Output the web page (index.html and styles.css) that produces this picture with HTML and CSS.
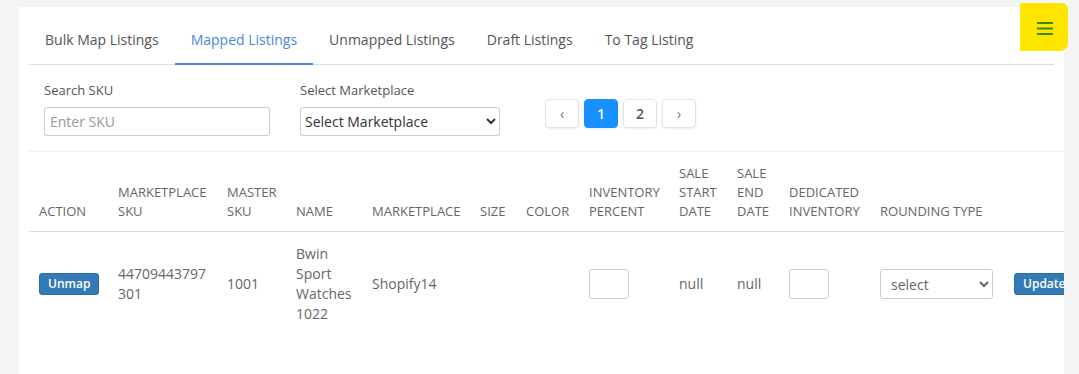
FILE: index.html
```html
<!DOCTYPE html>
<html lang="en">
<head>
    <meta charset="UTF-8">
    <meta name="viewport" content="width=device-width, initial-scale=1.0">
    <title>Mapped Listings</title>
    <link rel="stylesheet" href="styles.css">
</head>
<body>
    <div class="panel">
        <ul class="tabs">
            <li class="tab">Bulk Map Listings</li>
            <li class="tab active">Mapped Listings</li>
            <li class="tab">Unmapped Listings</li>
            <li class="tab">Draft Listings</li>
            <li class="tab">To Tag Listing</li>
        </ul>

        <div class="filters">
            <div class="field">
                <label>Search SKU</label>
                <input type="text" class="sku-input" placeholder="Enter SKU">
            </div>
            <div class="field">
                <label>Select Marketplace</label>
                <select class="market-select">
                    <option>Select Marketplace</option>
                </select>
            </div>
            <div class="pager">
                <button class="page arrow">&lsaquo;</button>
                <button class="page current">1</button>
                <button class="page">2</button>
                <button class="page arrow">&rsaquo;</button>
            </div>
        </div>

        <table class="listings">
            <colgroup>
                <col style="width:79px">
                <col style="width:109px">
                <col style="width:69px">
                <col style="width:76px">
                <col style="width:108px">
                <col style="width:46px">
                <col style="width:63px">
                <col style="width:90px">
                <col style="width:58px">
                <col style="width:52px">
                <col style="width:91px">
                <col style="width:134px">
                <col style="width:80px">
            </colgroup>
            <thead>
                <tr>
                    <th>Action</th>
                    <th>Marketplace SKU</th>
                    <th>Master SKU</th>
                    <th>Name</th>
                    <th>Marketplace</th>
                    <th>Size</th>
                    <th>Color</th>
                    <th>Inventory Percent</th>
                    <th>Sale Start Date</th>
                    <th>Sale End Date</th>
                    <th>Dedicated Inventory</th>
                    <th>Rounding Type</th>
                    <th></th>
                </tr>
            </thead>
            <tbody>
                <tr>
                    <td><button class="btn-blue">Unmap</button></td>
                    <td class="breakable">44709443797301</td>
                    <td>1001</td>
                    <td>Bwin Sport Watches 1022</td>
                    <td>Shopify14</td>
                    <td></td>
                    <td></td>
                    <td><input type="text" class="small-input"></td>
                    <td>null</td>
                    <td>null</td>
                    <td><input type="text" class="small-input"></td>
                    <td>
                        <select class="round-select">
                            <option>select</option>
                        </select>
                    </td>
                    <td><button class="btn-blue">Update</button></td>
                </tr>
            </tbody>
        </table>
    </div>

    <!-- highlighted menu toggle -->
    <div class="menu-mark">
        <svg width="16" height="14" viewBox="0 0 16 14">
            <rect x="0" y="1" width="16" height="2" fill="#3b8a00"/>
            <rect x="0" y="6.5" width="16" height="2" fill="#3b8a00"/>
            <rect x="0" y="12" width="16" height="2" fill="#3b8a00"/>
        </svg>
    </div>
</body>
</html>
```

FILE: styles.css
```css
body {
    margin: 0;
    padding: 7px 15px 0 19px;
    background-color: #f3f4f6;
    font-family: "Open Sans", "Liberation Sans", sans-serif;
    color: #666;
    height: 367px;
    overflow: hidden;
}
.panel {
    background-color: #fff;
    padding: 11px 10px 0 10px;
    height: 360px;
    overflow: hidden;
}
.tabs {
    list-style: none;
    margin: 0;
    padding: 0;
    display: flex;
    border-bottom: 1px solid #dedede;
}
.tab {
    padding: 12px 16px 13px;
    font-size: 14px;
    line-height: 20px;
    color: #555;
    margin-bottom: -1px;
    border-bottom: 2px solid transparent;
}
.tab.active {
    color: #4a88d6;
    border-bottom-color: #4a88d6;
}
.filters {
    display: flex;
    align-items: flex-start;
    padding: 16px 0 0 15px;
    height: 70px;
}
.field {
    display: flex;
    flex-direction: column;
    margin-right: 30px;
}
.field label {
    font-size: 13px;
    line-height: 18px;
    color: #555;
    margin-bottom: 8px;
}
.sku-input {
    width: 226px;
    height: 29px;
    box-sizing: border-box;
    border: 1px solid #ccc;
    border-radius: 3px;
    padding: 0 5px;
    font-family: inherit;
    font-size: 14px;
    color: #333;
}
.sku-input::placeholder {
    color: #999;
}
.market-select {
    width: 200px;
    height: 29px;
    box-sizing: border-box;
    border: 1px solid #ccc;
    border-radius: 3px;
    background: #fff;
    padding: 0;
    font-family: inherit;
    font-size: 14px;
    color: #333;
}
.pager {
    display: flex;
    gap: 5px;
    margin: 18px 0 0 15px;
}
.page {
    width: 34px;
    height: 29px;
    border: 1px solid #e3e3e3;
    border-radius: 4px;
    background: #fff;
    box-shadow: 0 1px 2px rgba(0, 0, 0, 0.08);
    font-family: inherit;
    font-size: 14px;
    font-weight: 600;
    color: #555;
    padding: 0;
}
.page.arrow {
    font-weight: 400;
    color: #777;
}
.page.current {
    background: #1890ff;
    border-color: #1890ff;
    color: #fff;
}
.listings {
    border-collapse: collapse;
    table-layout: fixed;
    width: 1055px;
    border-top: 1px solid #eee;
}
.listings th {
    text-align: left;
    vertical-align: bottom;
    font-size: 13px;
    line-height: 19px;
    font-weight: 400;
    text-transform: uppercase;
    color: #666;
    padding: 12px 10px 10px;
    border-bottom: 1px solid #ddd;
}
.listings td {
    vertical-align: middle;
    font-size: 14px;
    line-height: 20px;
    color: #666;
    padding: 12px 10px;
}
.breakable {
    word-break: break-all;
}
.btn-blue {
    background-color: #337ab7;
    border: 1px solid #2e6da4;
    border-radius: 3px;
    color: #fff;
    font-family: inherit;
    font-size: 12px;
    font-weight: 600;
    line-height: 18px;
    padding: 1px 8px;
    white-space: nowrap;
}
.small-input {
    width: 40px;
    height: 30px;
    box-sizing: border-box;
    border: 1px solid #ccc;
    border-radius: 3px;
}
.round-select {
    width: 113px;
    height: 30px;
    box-sizing: border-box;
    border: 1px solid #ccc;
    border-radius: 3px;
    background: #fff;
    padding: 0 6px;
    font-family: inherit;
    font-size: 14px;
    color: #666;
}
.menu-mark {
    position: absolute;
    left: 1020px;
    top: 3px;
    width: 48px;
    height: 48px;
    background-color: #ffe600;
    border-radius: 2px 6px 8px 1px;
    display: flex;
    align-items: center;
    justify-content: center;
}
.menu-mark svg {
    margin: 2px 0 0 2px;
}
```
